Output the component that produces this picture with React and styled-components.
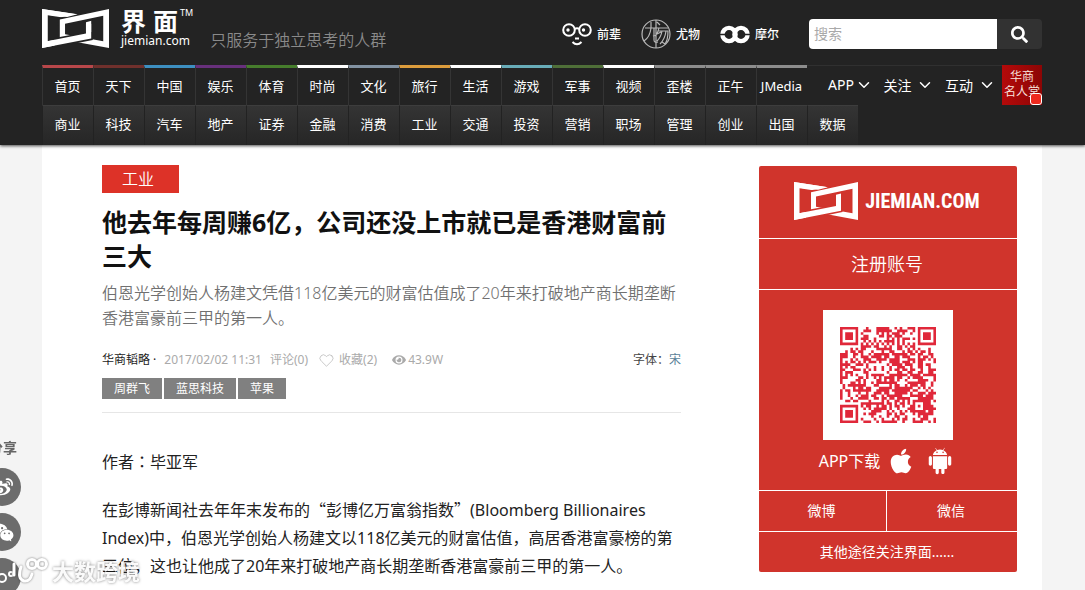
import styled, { createGlobalStyle } from 'styled-components';
import { FaApple, FaEye, FaSearch, FaWeibo } from 'react-icons/fa';
import { AiFillAndroid, AiFillWechat } from 'react-icons/ai';
import { FiChevronDown, FiHeart } from 'react-icons/fi';

const GlobalStyle = createGlobalStyle`
  * {
    box-sizing: border-box;
  }

  body {
    margin: 0;
    background: #f4f4f4;
    color: #222;
    font-family: 'Noto Sans', 'Noto Sans CJK SC', sans-serif;
    font-size: 12px;
    overflow: hidden;
  }

  h1, p {
    margin: 0;
  }

  a {
    color: inherit;
    text-decoration: none;
  }

  button, input {
    font: inherit;
    border: 0;
    margin: 0;
  }

  svg {
    display: block;
    flex: none;
  }
`;

const Header = styled.header`
  position: relative;
  padding: 0 43px 0 42px;
  background: #232323;
  box-shadow: 0 1px 3px rgba(0, 0, 0, 0.7);
`;

const TopBar = styled.div`
  display: flex;
  align-items: flex-start;
  height: 65px;
`;

const Brand = styled.a`
  display: flex;
  gap: 12px;
  padding-top: 9px;
  color: #fff;
`;

const BrandText = styled.span`
  display: flex;
  flex-direction: column;
`;

const BrandName = styled.span`
  display: flex;
  gap: 7px;
  font-size: 25px;
  font-weight: 700;
  line-height: 24px;

  sup {
    margin: -2px 0 0 -5px;
    font-size: 9px;
    font-weight: 400;
    line-height: 12px;
  }
`;

const BrandDomain = styled.span`
  font-size: 12px;
  line-height: 16px;
`;

const Slogan = styled.span`
  margin-left: 17px;
  padding-top: 28px;
  color: #8a8a8a;
  font-size: 16px;
  font-weight: 350;
  line-height: 24px;
`;

const Partners = styled.nav`
  display: flex;
  gap: 20px;
  margin-left: auto;
  padding-top: 19px;
`;

const Partner = styled.a`
  display: flex;
  align-items: center;
  gap: 5px;
  height: 30px;
  color: #fff;
  font-weight: 500;
`;

const Search = styled.form`
  display: flex;
  width: 233px;
  height: 30px;
  margin: 19px 0 0 30px;
  border-radius: 4px;
  overflow: hidden;
`;

const SearchInput = styled.input`
  flex: 1;
  min-width: 0;
  padding: 0 5px 2px;
  background: #fff;
  font-size: 14px;
  outline: none;

  &::placeholder {
    color: #a9a9a9;
  }
`;

const SearchButton = styled.button`
  display: flex;
  align-items: center;
  justify-content: center;
  width: 45px;
  background: #323232;
  color: #fff;
  cursor: pointer;
`;

const NavRow = styled.nav`
  display: flex;
`;

const NavLink = styled.a`
  width: 51px;
  height: 40px;
  padding-right: 1px;
  border-top: 3px solid ${p => p.$color};
  border-left: 1px solid #343434;
  color: #fff;
  font-size: 13px;
  line-height: 36px;
  text-align: center;
  white-space: nowrap;
`;

const SubLink = styled(NavLink)`
  border-top: 1px solid #3d3d3d;
  border-left-color: #222;
  background: linear-gradient(#343434, #262626);
`;

const Menus = styled.div`
  display: flex;
  flex: 1;
  align-items: center;
  justify-content: space-between;
  padding: 0 6px 2px 21px;
  border-top: 1px solid #303030;
`;

const MenuButton = styled.button`
  display: flex;
  align-items: center;
  gap: ${p => p.$gap}px;
  padding: 0;
  background: none;
  color: #fff;
  font-size: 14px;
  cursor: pointer;
`;

const HallOfFame = styled.a`
  position: relative;
  width: 40px;
  height: 40px;
  padding-top: 4px;
  background: linear-gradient(90deg, #b40a0a, #8c0505);
  color: #fbe9e0;
  font-size: 12px;
  font-weight: 350;
  line-height: 15px;
  text-align: center;
`;

const Badge = styled.span`
  position: absolute;
  right: 0;
  bottom: 0;
  width: 12px;
  height: 12px;
  border: 1px solid #fff;
  border-radius: 3px;
  background: #ee2a1e;
`;

const Page = styled.main`
  display: flex;
  align-items: flex-start;
  justify-content: space-between;
  min-height: 460px;
  margin: 0 43px 0 42px;
  padding: 20px 25px 0 60px;
  background: #fff;
`;

const Article = styled.article`
  flex: 1;
  max-width: 579px;
`;

const Category = styled.a`
  display: inline-block;
  padding: 0 25px 0 20px;
  background: #dd3228;
  color: #fff;
  font-size: 16px;
  font-weight: 350;
  line-height: 28px;
`;

const Title = styled.h1`
  margin-top: 12px;
  color: #111;
  font-size: 25px;
  font-weight: 700;
  line-height: 34px;
`;

const Summary = styled.p`
  margin-top: 8px;
  color: #707070;
  font-size: 16px;
  font-weight: 350;
  line-height: 25px;
`;

const Meta = styled.div`
  display: flex;
  align-items: center;
  margin-top: 20px;
  color: #aaa;
  line-height: 18px;
`;

const Author = styled.span`
  margin-right: 8px;
  color: #222;
`;

const MetaItem = styled.span`
  display: flex;
  align-items: center;
  gap: ${p => p.$gap || 0}px;
  margin-right: ${p => p.$after}px;
`;

const FontSwitch = styled.span`
  margin-left: auto;
  color: #444;

  a {
    color: #5a7f99;
  }
`;

const Tags = styled.div`
  display: flex;
  gap: 2px;
  margin-top: 9px;
  padding-bottom: 13px;
  border-bottom: 1px solid #e6e6e6;
`;

const Tag = styled.a`
  padding: 0 12px;
  background: #808080;
  color: #fff;
  line-height: 21px;
`;

const Content = styled.div`
  padding-top: 35px;
  color: #222;
  font-size: 16px;
  line-height: 28px;

  p + p {
    margin-top: 20px;
  }
`;

/* full-width colon set in the middle of its box */
const Colon = styled.span`
  font-family: 'Noto Sans CJK TC', sans-serif;
  line-height: 1;
`;

/* full-width quotation marks */
const Quote = styled.span`
  font-family: 'Noto Sans CJK SC', sans-serif;
  line-height: 1;
`;

const Sidebar = styled.aside`
  display: flex;
  flex-direction: column;
  gap: 1px;
  width: 258px;
  margin-top: 1px;
  border-radius: 2px;
  overflow: hidden;
  color: #fff;
`;

const Panel = styled.a`
  display: flex;
  align-items: center;
  justify-content: center;
  height: ${p => p.$height}px;
  padding: 0 2px 2px 0;
  background: #d0342c;
  font-size: ${p => p.$size || 14}px;
  font-weight: ${p => p.$weight || 400};
`;

const SideLogoText = styled.span`
  margin-left: 7px;
  font-family: 'Roboto Condensed', 'Liberation Sans Narrow', 'Liberation Sans', sans-serif;
  font-size: 20px;
  font-weight: 700;
`;

const Download = styled.div`
  display: flex;
  flex-direction: column;
  align-items: center;
  height: 200px;
  padding-top: 20px;
  background: #d0342c;
`;

const QrFrame = styled.div`
  padding: 17px;
  background: #fff;
`;

const Stores = styled.div`
  display: flex;
  align-items: center;
  margin-top: 6px;
  padding-right: 2px;
  font-size: 16px;
  line-height: 30px;

  svg {
    margin-left: 7px;
  }

  svg + svg {
    margin-left: 10px;
  }
`;

const Split = styled.div`
  display: grid;
  grid-template-columns: 127px 1fr;
  gap: 1px;
`;

const ShareBar = styled.div`
  position: fixed;
  left: -17px;
  bottom: -6px;
  display: flex;
  flex-direction: column;
  align-items: center;
  gap: 7px;
  width: 38px;
`;

const ShareTitle = styled.span`
  margin-bottom: 3px;
  padding-left: 2px;
  color: #666;
  font-size: 14px;
  font-weight: 700;
  line-height: 20px;
`;

const ShareButton = styled.button`
  display: flex;
  align-items: center;
  justify-content: center;
  width: 38px;
  height: 38px;
  padding: 0;
  border-radius: 50%;
  background: #6c6c6c;
  color: #fff;
  cursor: pointer;
`;

const Watermark = styled.div`
  position: fixed;
  left: 10px;
  bottom: 4px;
  display: flex;
  align-items: center;
  gap: 3px;
  color: rgba(255, 255, 255, 0.95);
  font-size: 22px;
  font-weight: 700;
  line-height: 30px;
  text-shadow: 0 0 3px rgba(0, 0, 0, 0.5);

  svg {
    filter: drop-shadow(0 0 1px rgba(0, 0, 0, 0.5));
  }
`;

const channels = [
  ['首页', '#b8474a'],
  ['天下', '#70302c'],
  ['中国', '#3d8fc0'],
  ['娱乐', '#68307c'],
  ['体育', '#467d2c'],
  ['时尚', '#ffffff'],
  ['文化', '#8292a2'],
  ['旅行', '#dc9c3c'],
  ['生活', '#ffffff'],
  ['游戏', '#68acb8'],
  ['军事', '#4f6f38'],
  ['视频', '#ffffff'],
  ['歪楼', '#8c8c8c'],
  ['正午', '#8c8c8c'],
  ['JMedia', '#8c8c8c'],
];

const business = [
  '商业', '科技', '汽车', '地产', '证券', '金融', '消费', '工业',
  '交通', '投资', '营销', '职场', '管理', '创业', '出国', '数据',
];

const menus = [['APP', 1], ['关注', 5], ['互动', 5]];

const tags = ['周群飞', '蓝思科技', '苹果'];

function Logo({ width, height, bg }) {
  return (
    <svg width={width} height={height} viewBox="0 0 64 37" preserveAspectRatio="none" aria-hidden="true">
      <path fill="#fff" fillRule="evenodd" d="M0 0L47 7V28L0 37ZM5.500 6V30.500L42 23.500V11.500Z" />
      <path fill={bg} d="M15 8.500L50 1.500V10.500L42 12.500L23 16H15Z" />
      <path fill="#fff" d="M0 0L34 5L24 7.500L5 5.500H0Z" />
      <path fill="#fff" fillRule="evenodd" d="M64 0V37L17 28.500V10ZM58.500 6.500L22 14V24L58.500 30.500Z" />
      <path fill={bg} d="M12 27.500L42 21.800H48.500V29.300L12 36.500Z" />
      <path fill="#fff" d="M0 31.500L42 23.300V14H47V28L0 37Z" />
    </svg>
  );
}

function Glasses() {
  return (
    <svg width="30" height="24" viewBox="0 0 30 24" fill="none" stroke="#fff" aria-hidden="true">
      <circle cx="7" cy="8" r="5.800" strokeWidth="2" />
      <circle cx="23" cy="8" r="5.800" strokeWidth="2" />
      <path strokeWidth="2" d="M12.500 7Q15 5.500 17.500 7M10.500 20Q15 24.500 19.500 20" />
      <path strokeWidth="2" d="M13 16.500H17" />
      <circle cx="6" cy="8" r="1.700" fill="#fff" stroke="none" />
      <circle cx="21.500" cy="8" r="1.700" fill="#fff" stroke="none" />
    </svg>
  );
}

function Seal() {
  return (
    <svg width="30" height="30" viewBox="0 0 30 30" fill="none" stroke="#b8b8b8" strokeWidth="1.200" aria-hidden="true">
      <circle cx="15" cy="15" r="14" />
      <path d="M4 9H27M10 3V9Q9 18 3 22M13 9V21Q13 24 17 23M15 1V29M16 3L19 6M12 17L20 13M18 9Q17 14 14 17M17 12H27Q27 21 24 25L21 23M21 12Q20 18 16 22M25 12Q24 20 19 25" />
    </svg>
  );
}

function Rings() {
  return (
    <svg width="30" height="19" viewBox="0 0 30 19" fill="none" stroke="#fff" strokeWidth="4.400" aria-hidden="true">
      <circle cx="9" cy="9.500" r="6.600" />
      <circle cx="21" cy="9.500" r="6.600" />
      <path stroke="#232323" strokeWidth="1.600" d="M0 9.500H5M25 9.500H30" />
    </svg>
  );
}

const QR_SIZE = 37;

function inSquare(x, y, cx, cy, r) {
  return Math.max(Math.abs(x - cx), Math.abs(y - cy)) <= r;
}

function qrPath() {
  const eyes = [[3, 3], [33, 3], [3, 33]];
  let seed = 20170202;
  let d = '';
  for (let y = 0; y < QR_SIZE; y++) {
    for (let x = 0; x < QR_SIZE; x++) {
      seed = (seed * 1103515245 + 12345) % 2147483648;
      let on = seed / 2147483648 < 0.54;
      if (x === 6 || y === 6) on = (x + y) % 2 === 0;
      if (inSquare(x, y, 30, 30, 2)) on = !inSquare(x, y, 30, 30, 1) || (x === 30 && y === 30);
      eyes.forEach(([cx, cy]) => {
        if (inSquare(x, y, cx, cy, 4)) {
          const ring = inSquare(x, y, cx, cy, 3) && !inSquare(x, y, cx, cy, 2);
          on = ring || inSquare(x, y, cx, cy, 1);
        }
      });
      if (on) d += `M${x} ${y}h1v1h-1z`;
    }
  }
  return d;
}

function QrCode() {
  return (
    <svg width="96" height="96" viewBox={`0 0 ${QR_SIZE} ${QR_SIZE}`} role="img" aria-label="APP下载">
      <path fill="#e0283a" d={qrPath()} />
    </svg>
  );
}

export default function App() {
  return (
    <>
      <GlobalStyle />
      <Header>
        <TopBar>
          <Brand href="#">
            <Logo width={67} height={39} bg="#232323" />
            <BrandText>
              <BrandName>
                <span>界</span>
                <span>面</span>
                <sup>TM</sup>
              </BrandName>
              <BrandDomain>jiemian.com</BrandDomain>
            </BrandText>
          </Brand>
          <Slogan>只服务于独立思考的人群</Slogan>
          <Partners>
            <Partner href="#"><Glasses />前辈</Partner>
            <Partner href="#"><Seal />尤物</Partner>
            <Partner href="#"><Rings />摩尔</Partner>
          </Partners>
          <Search onSubmit={e => e.preventDefault()}>
            <SearchInput type="text" placeholder="搜索" aria-label="搜索" />
            <SearchButton type="submit" aria-label="搜索"><FaSearch size={17} /></SearchButton>
          </Search>
        </TopBar>
        <NavRow>
          {channels.map(([name, color]) => (
            <NavLink key={name} href="#" $color={color}>{name}</NavLink>
          ))}
          <Menus>
            {menus.map(([name, gap]) => (
              <MenuButton key={name} type="button" $gap={gap}>
                {name}
                <FiChevronDown size={18} />
              </MenuButton>
            ))}
          </Menus>
          <HallOfFame href="#">
            华商<br />名人堂
            <Badge />
          </HallOfFame>
        </NavRow>
        <NavRow>
          {business.map(name => (
            <SubLink key={name} href="#">{name}</SubLink>
          ))}
        </NavRow>
      </Header>

      <Page>
        <Article>
          <Category href="#">工业</Category>
          <Title>他去年每周赚6亿，公司还没上市就已是香港财富前三大</Title>
          <Summary>
            伯恩光学创始人杨建文凭借118亿美元的财富估值成了20年来打破地产商长期垄断香港富豪前三甲的第一人。
          </Summary>
          <Meta>
            <Author>华商韬略 ·</Author>
            <MetaItem $after={8}>2017/02/02 11:31</MetaItem>
            <MetaItem $after={11}>评论(0)</MetaItem>
            <MetaItem $gap={5} $after={15}><FiHeart size={15} strokeWidth={1} />收藏(2)</MetaItem>
            <MetaItem $gap={2} $after={0}><FaEye size={14} />43.9W</MetaItem>
            <FontSwitch>字体：<a href="#">宋</a></FontSwitch>
          </Meta>
          <Tags>
            {tags.map(tag => <Tag key={tag} href="#">{tag}</Tag>)}
          </Tags>
          <Content>
            <p>作者<Colon>：</Colon>毕亚军</p>
            <p>
              在彭博新闻社去年年末发布的<Quote>“</Quote>彭博亿万富翁指数<Quote>”</Quote>(Bloomberg Billionaires
              Index)中，伯恩光学创始人杨建文以118亿美元的财富估值，高居香港富豪榜的第三位，这也让他成了20年来打破地产商长期垄断香港富豪前三甲的第一人。
            </p>
          </Content>
        </Article>

        <Sidebar>
          <Panel href="#" $height={72}>
            <Logo width={64} height={38} bg="#d0342c" />
            <SideLogoText>JIEMIAN.COM</SideLogoText>
          </Panel>
          <Panel href="#" $height={50} $size={18} $weight={350}>注册账号</Panel>
          <Download>
            <QrFrame><QrCode /></QrFrame>
            <Stores>
              APP下载
              <FaApple size={28} />
              <AiFillAndroid size={30} />
            </Stores>
          </Download>
          <Split>
            <Panel href="#" $height={40}>微博</Panel>
            <Panel href="#" $height={40}>微信</Panel>
          </Split>
          <Panel href="#" $height={40}>其他途径关注界面......</Panel>
        </Sidebar>
      </Page>

      <ShareBar>
        <ShareTitle>分享</ShareTitle>
        <ShareButton type="button" aria-label="微博"><FaWeibo size={21} /></ShareButton>
        <ShareButton type="button" aria-label="微信"><AiFillWechat size={25} /></ShareButton>
        <ShareButton type="button" aria-label="更多">
          <svg width="26" height="14" viewBox="0 0 26 14" fill="none" stroke="#fff" strokeWidth="2">
            <circle cx="13" cy="8" r="4" />
            <circle cx="22" cy="4" r="2" />
          </svg>
        </ShareButton>
      </ShareBar>

      <Watermark>
        <svg width="39" height="28" viewBox="0 0 39 28" fill="none" stroke="#fff" strokeWidth="3" strokeLinecap="round">
          <path d="M4 7V18M11 10Q7 22 14 24Q20 25 22 17" />
          <circle cx="22" cy="7" r="4.500" />
          <circle cx="32" cy="7" r="4.500" />
        </svg>
        大数跨境
      </Watermark>
    </>
  );
}
